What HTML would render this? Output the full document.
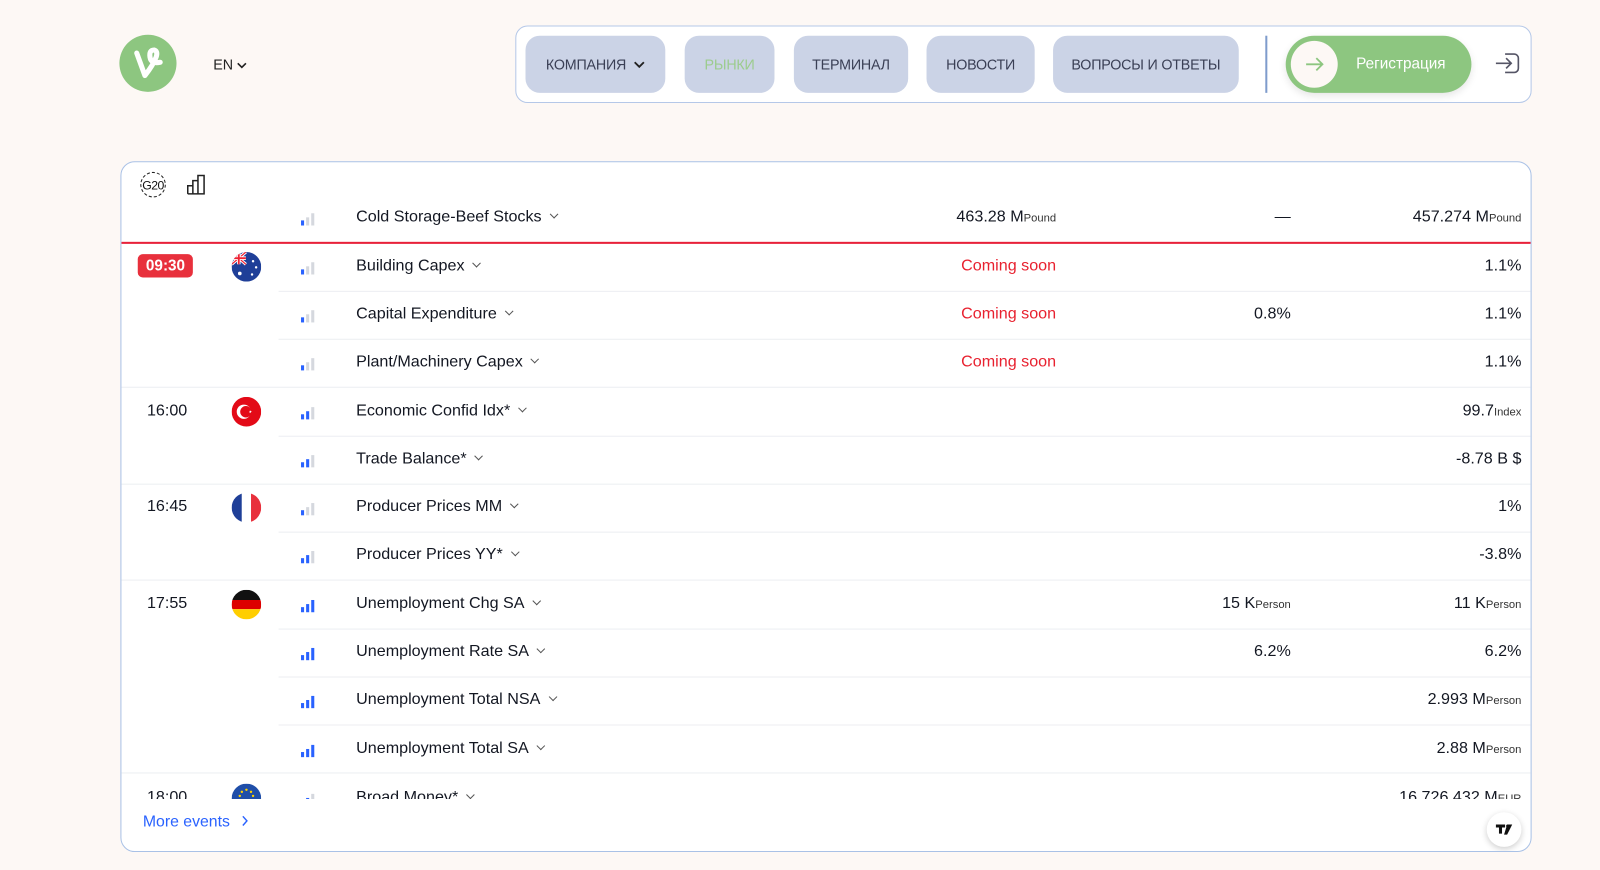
<!DOCTYPE html>
<html><head><meta charset="utf-8">
<style>
*{box-sizing:border-box;margin:0;padding:0}
body{width:1600px;height:870px;background:#fdf8f5;font-family:"Liberation Sans","DejaVu Sans",sans-serif;color:#131722;position:relative;overflow:hidden}
#wrap{position:absolute;left:0;top:0;width:1568px;height:853px;transform:scale(1.0204);transform-origin:0 0}
.logo{position:absolute;left:117px;top:34px;width:56px;height:56px;border-radius:50%;background:#8dc680}
.lang{position:absolute;left:209px;top:55px;font-size:14px;color:#222}
.nav{position:absolute;left:505px;top:25px;width:996px;height:76px;background:#fff;border:1.5px solid #b5c8e8;border-radius:12px}
.btn{position:absolute;top:9px;height:56px;border-radius:14px;background:#cbd3e6;font-size:14px;color:#3a3f55;display:flex;align-items:center;justify-content:center;letter-spacing:-.2px}
.div{position:absolute;left:734px;top:9px;width:2px;height:56px;background:#7f9ccc}
.reg{position:absolute;left:754px;top:9px;width:182px;height:56px;border-radius:28px;background:#8dc680;box-shadow:0 3px 8px rgba(0,0,0,.1)}
.reg .c{position:absolute;left:5px;top:5px;width:46px;height:46px;border-radius:50%;background:#fdf8f5}
.reg span{position:absolute;left:69px;top:19px;color:#fff;font-size:15px}
.card{position:absolute;left:118px;top:158px;width:1383px;height:677px;background:#fff;border:1.5px solid #a9c1e6;border-radius:14px;overflow:hidden}
.row{position:absolute;left:0;width:1383px;height:47px;font-size:15.8px}
.bl{position:absolute;height:1px;background:#eceef2}
.name{position:absolute;left:230px;top:14px}
.name::after{content:"";display:inline-block;width:5px;height:5px;border-right:1.3px solid #555;border-bottom:1.3px solid #555;transform:rotate(45deg);margin-left:9px;position:relative;top:-4px}
.act{position:absolute;right:467px;top:14px;text-align:right}
.fc{position:absolute;right:237px;top:14px;text-align:right}
.pr{position:absolute;right:11px;top:14px;text-align:right}
.u{font-size:11px;color:#333}
.red{color:#e8212f}
.bars{position:absolute;left:176px;top:19px;width:14px;height:12px}
.bars i{position:absolute;bottom:0;width:3px;background:#d5d8de}
.bars i:nth-child(1){left:0;height:5px}.bars i:nth-child(2){left:5px;height:8px}.bars i:nth-child(3){left:10px;height:12px}
.b1 i:nth-child(1),.b2 i:nth-child(-n+2),.b3 i{background:#2962ff}
.flag{position:absolute;left:108px;top:9px;width:29px;height:29px;border-radius:50%;overflow:hidden}
.time{position:absolute;left:25px;top:14px}
.badge{position:absolute;left:16px;top:11px;background:#e8303c;color:#fff;font-weight:bold;border-radius:5px;padding:3px 8px;font-size:15px}
</style></head><body><div id="wrap">
<div class="logo"><svg width="56" height="56" viewBox="0 0 56 56"><path d="M17 18 L25 40 Q33 30 36 22 Q38 16 34 15 Q29 15 30 22 Q31 29 40 27" fill="none" stroke="#fff" stroke-width="5" stroke-linecap="round" stroke-linejoin="round"/></svg></div>
<div class="lang">EN <svg width="10" height="7" viewBox="0 0 10 7"><path d="M1 1l4 4 4-4" fill="none" stroke="#222" stroke-width="1.6"/></svg></div>
<div class="nav">
<div class="btn" style="left:9px;width:137px">КОМПАНИЯ&nbsp;&nbsp;<svg width="11" height="7" viewBox="0 0 11 7"><path d="M1 1l4.5 4.5L10 1" fill="none" stroke="#222" stroke-width="1.8"/></svg></div>
<div class="btn" style="left:165px;width:88px;color:#9ccc8e">РЫНКИ</div>
<div class="btn" style="left:272px;width:112px">ТЕРМИНАЛ</div>
<div class="btn" style="left:402px;width:106px">НОВОСТИ</div>
<div class="btn" style="left:526px;width:182px">ВОПРОСЫ И ОТВЕТЫ</div>
<div class="div"></div>
<div class="reg"><div class="c"><svg width="46" height="46" viewBox="0 0 46 46"><path d="M15 23h16M25 17l6 6-6 6" fill="none" stroke="#8dc680" stroke-width="1.8"/></svg></div><span>Регистрация</span></div>
<svg style="position:absolute;left:958px;top:22px" width="28" height="28" viewBox="0 0 28 28"><path d="M11 5h9a4 4 0 0 1 4 4v10a4 4 0 0 1-4 4h-9" fill="none" stroke="#556" stroke-width="1.6"/><path d="M2 14h15M12 9l5 5-5 5" fill="none" stroke="#556" stroke-width="1.6"/></svg>
</div>
<div class="card">
<svg style="position:absolute;left:16px;top:9px" width="30" height="26" viewBox="0 0 30 26"><circle cx="15" cy="13" r="12" fill="none" stroke="#222" stroke-width="1" stroke-dasharray="3 2"/><text x="15" y="17.5" text-anchor="middle" font-size="12" letter-spacing="-0.5" font-family="Liberation Sans" fill="#111">G20</text></svg>
<svg style="position:absolute;left:64px;top:12px" width="22" height="20" viewBox="0 0 22 20"><path d="M1 19V11h5v8M6 19V6h5v13M11 19V1h6v18H1" fill="none" stroke="#222" stroke-width="1.5"/></svg>

<div class="row" style="top:31px"><div class="bars b1"><i></i><i></i><i></i></div><div class="name">Cold Storage-Beef Stocks</div><div class="act">463.28 M<span class="u">Pound</span></div><div class="fc">—</div><div class="pr">457.274 M<span class="u">Pound</span></div></div>
<div style="position:absolute;left:0;top:78px;width:1383px;height:2px;background:#e8213a"></div>

<div class="row" style="top:79px"><div class="badge">09:30</div>
<div class="flag"><svg width="29" height="29" viewBox="0 0 29 29"><rect width="29" height="29" fill="#1f3f98"/><path d="M0 0L14 12M14 0L0 12" stroke="#fff" stroke-width="3"/><path d="M0 0L14 12M14 0L0 12" stroke="#e23" stroke-width="1.2"/><path d="M7 0v12M0 6h14" stroke="#fff" stroke-width="3.5"/><path d="M7 0v12M0 6h14" stroke="#e23" stroke-width="1.8"/><circle cx="8" cy="21" r="1.8" fill="#fff"/><circle cx="21" cy="9" r="1.2" fill="#fff"/><circle cx="24" cy="15" r="1.2" fill="#fff"/><circle cx="20" cy="22" r="1.2" fill="#fff"/></svg></div>
<div class="bars b1"><i></i><i></i><i></i></div><div class="name">Building Capex</div><div class="act red">Coming soon</div><div class="pr">1.1%</div></div>
<div class="bl" style="left:154px;right:0;top:126px"></div>
<div class="row" style="top:126px"><div class="bars b1"><i></i><i></i><i></i></div><div class="name">Capital Expenditure</div><div class="act red">Coming soon</div><div class="fc">0.8%</div><div class="pr">1.1%</div></div>
<div class="bl" style="left:154px;right:0;top:173px"></div>
<div class="row" style="top:173px"><div class="bars b1"><i></i><i></i><i></i></div><div class="name">Plant/Machinery Capex</div><div class="act red">Coming soon</div><div class="pr">1.1%</div></div>
<div class="bl" style="left:0;right:0;top:220px"></div>

<div class="row" style="top:221px"><div class="time">16:00</div>
<div class="flag"><svg width="29" height="29" viewBox="0 0 29 29"><rect width="29" height="29" fill="#e30a17"/><circle cx="12" cy="14.5" r="7" fill="#fff"/><circle cx="14" cy="14.5" r="5.6" fill="#e30a17"/><path d="M20 14.5l-3 1 2-2.5v3l-2-2.5z" fill="#fff"/></svg></div>
<div class="bars b2"><i></i><i></i><i></i></div><div class="name">Economic Confid Idx*</div><div class="pr">99.7<span class="u">Index</span></div></div>
<div class="bl" style="left:154px;right:0;top:268px"></div>
<div class="row" style="top:268px"><div class="bars b2"><i></i><i></i><i></i></div><div class="name">Trade Balance*</div><div class="pr">-8.78 B $</div></div>
<div class="bl" style="left:0;right:0;top:315px"></div>

<div class="row" style="top:315px"><div class="time">16:45</div>
<div class="flag"><svg width="29" height="29" viewBox="0 0 29 29"><rect width="10" height="29" fill="#1f3f98"/><rect x="10" width="9" height="29" fill="#fff"/><rect x="19" width="10" height="29" fill="#e8303c"/></svg></div>
<div class="bars b1"><i></i><i></i><i></i></div><div class="name">Producer Prices MM</div><div class="pr">1%</div></div>
<div class="bl" style="left:154px;right:0;top:362px"></div>
<div class="row" style="top:362px"><div class="bars b2"><i></i><i></i><i></i></div><div class="name">Producer Prices YY*</div><div class="pr">-3.8%</div></div>
<div class="bl" style="left:0;right:0;top:409px"></div>

<div class="row" style="top:410px"><div class="time">17:55</div>
<div class="flag"><svg width="29" height="29" viewBox="0 0 29 29"><rect width="29" height="10" fill="#111"/><rect y="10" width="29" height="9" fill="#dd0000"/><rect y="19" width="29" height="10" fill="#ffce00"/></svg></div>
<div class="bars b3"><i></i><i></i><i></i></div><div class="name">Unemployment Chg SA</div><div class="fc">15 K<span class="u">Person</span></div><div class="pr">11 K<span class="u">Person</span></div></div>
<div class="bl" style="left:154px;right:0;top:457px"></div>
<div class="row" style="top:457px"><div class="bars b3"><i></i><i></i><i></i></div><div class="name">Unemployment Rate SA</div><div class="fc">6.2%</div><div class="pr">6.2%</div></div>
<div class="bl" style="left:154px;right:0;top:504px"></div>
<div class="row" style="top:504px"><div class="bars b3"><i></i><i></i><i></i></div><div class="name">Unemployment Total NSA</div><div class="pr">2.993 M<span class="u">Person</span></div></div>
<div class="bl" style="left:154px;right:0;top:551px"></div>
<div class="row" style="top:552px"><div class="bars b3"><i></i><i></i><i></i></div><div class="name">Unemployment Total SA</div><div class="pr">2.88 M<span class="u">Person</span></div></div>
<div class="bl" style="left:0;right:0;top:598px"></div>

<div style="position:absolute;left:0;top:599px;width:1383px;height:25px;overflow:hidden">
<div class="row" style="top:1px"><div class="time">18:00</div>
<div class="flag"><svg width="29" height="29" viewBox="0 0 29 29"><rect width="29" height="29" fill="#1f4ea8"/><g fill="#ffd200"><circle cx="14.5" cy="6" r="1.2"/><circle cx="10" cy="8" r="1.2"/><circle cx="19" cy="8" r="1.2"/><circle cx="8" cy="12" r="1.2"/><circle cx="21" cy="12" r="1.2"/></g></svg></div>
<div class="bars b2"><i></i><i></i><i></i></div><div class="name">Broad Money*</div><div class="pr">16 726.432 M<span class="u">EUR</span></div></div>
</div>

<div style="position:absolute;left:21px;top:638px;color:#2962ff;font-size:15.5px">More events <svg width="8" height="11" viewBox="0 0 8 11" style="margin-left:6px"><path d="M2 1l4 4.5L2 10" fill="none" stroke="#2962ff" stroke-width="1.4"/></svg></div>
<div style="position:absolute;left:1338px;top:637px;width:34px;height:34px;border-radius:50%;background:#fff;box-shadow:0 2px 6px rgba(0,0,0,.2)"><svg width="34" height="34" viewBox="0 0 34 34"><path d="M9 12h9v3h-3v6h-3v-6H9z" fill="#111"/><path d="M20 12h5l-5 10h-3z" fill="#111"/><circle cx="20.5" cy="13.5" r="1.5" fill="#111"/></svg></div>
</div>
</div></body></html>
